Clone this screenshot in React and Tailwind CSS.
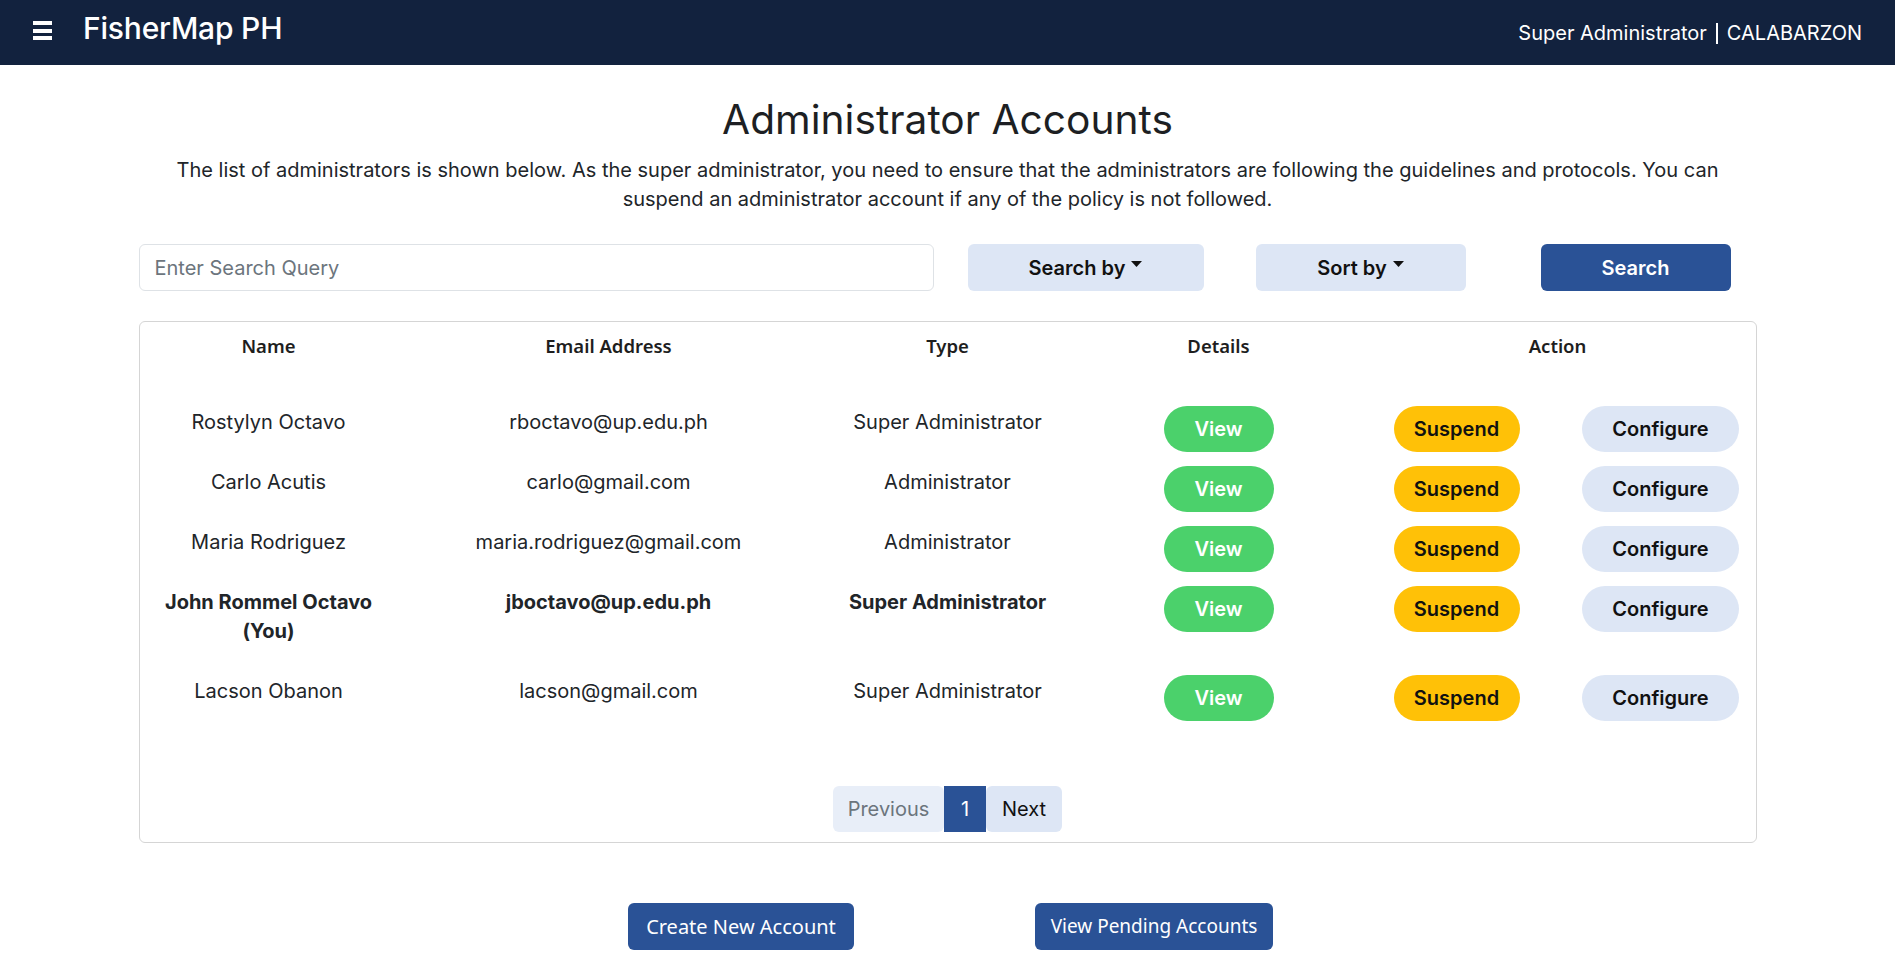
import React from "react";

const rows = [
  { name: ["Rostylyn Octavo"], email: "rboctavo@up.edu.ph", type: "Super Administrator" },
  { name: ["Carlo Acutis"], email: "carlo@gmail.com", type: "Administrator" },
  { name: ["Maria Rodriguez"], email: "maria.rodriguez@gmail.com", type: "Administrator" },
  { name: ["John Rommel Octavo", "(You)"], email: "jboctavo@up.edu.ph", type: "Super Administrator", me: true },
  { name: ["Lacson Obanon"], email: "lacson@gmail.com", type: "Super Administrator" },
];

function Caret() {
  return (
    <svg width="11" height="6" viewBox="0 0 11 6" className="ml-[6px] mb-[8px]">
      <path d="M0 0 L11 0 L5.5 6 Z" fill="#111" />
    </svg>
  );
}

export default function App() {
  const inter = { fontFamily: "Inter, 'Liberation Sans', sans-serif" };
  return (
    <div className="min-h-screen bg-white text-[#212529]" style={inter}>
      {/* Navbar */}
      <nav className="h-[65px] bg-[#12223e] flex items-start px-[33px] text-white">
        <div className="mt-[21px] flex flex-col gap-[3.5px] w-[19px]">
          <div className="h-[4px] bg-white" />
          <div className="h-[4px] bg-white" />
          <div className="h-[4px] bg-white" />
        </div>
        <div className="ml-[31px] mt-[13px] text-[30px] leading-[30px] font-medium tracking-[-0.2px]">FisherMap PH</div>
        <div className="ml-auto mt-[21px] flex items-center text-[20px] leading-[24px]">
          <span>Super Administrator</span>
          <span className="mx-[9px] w-[2px] h-[21px] bg-white" />
          <span>CALABARZON</span>
        </div>
      </nav>

      {/* Heading */}
      <h1 className="mt-[31px] text-center text-[40.7px] leading-[48px] font-normal text-[#1d1f23]">Administrator Accounts</h1>
      <p className="mt-[12px] text-center text-[20px] leading-[29px]">
        The list of administrators is shown below. As the super administrator, you need to ensure that the administrators are following the guidelines and protocols. You can
        <br />
        suspend an administrator account if any of the policy is not followed.
      </p>

      {/* Search row */}
      <div className="w-[1618px] mx-auto mt-[30px] flex items-center">
        <div className="w-[795px] h-[47px] border border-[#dee2e6] rounded-[6px] flex items-center px-[15px] text-[20px] text-[#6c757d]">
          Enter Search Query
        </div>
        <button className="ml-[34px] w-[236px] h-[47px] rounded-[6px] bg-[#dde6f5] text-[20px] font-semibold text-[#111] flex items-center justify-center">
          Search by<Caret />
        </button>
        <button className="ml-[52px] w-[210px] h-[47px] rounded-[6px] bg-[#dde6f5] text-[20px] font-semibold text-[#111] flex items-center justify-center">
          Sort by<Caret />
        </button>
        <button className="ml-[75px] w-[190px] h-[47px] rounded-[6px] bg-[#2a5296] text-[20px] font-semibold text-white flex items-center justify-center">
          Search
        </button>
      </div>

      {/* Table card */}
      <div className="w-[1618px] mx-auto mt-[30px] border border-[#d5d5d5] rounded-[6px] pt-[9px] pb-[10px]">
        <div
          className="grid grid-cols-[218px_462px_216px_326px_150px_219px] pl-[20px] text-[18.5px] leading-[29px] font-semibold text-[#1e1e1e] h-[75px]"
          style={{ fontFamily: "'Noto Sans', 'Open Sans', sans-serif" }}
        >
          <div className="text-center">Name</div>
          <div className="text-center">Email Address</div>
          <div className="text-center">Type</div>
          <div className="text-center">Details</div>
          <div className="col-span-2 text-center pr-[17px]">Action</div>
        </div>
        {rows.map((r, i) => (
          <div key={i} className="grid grid-cols-[218px_462px_216px_326px_150px_219px] pl-[20px] items-start text-[20px]">
            <div className={`text-center pt-[2px] pb-[29px] leading-[29px] whitespace-nowrap ${r.me ? "font-bold" : ""}`}>
              {r.name.map((n, j) => (
                <div key={j}>{n}</div>
              ))}
            </div>
            <div className={`text-center pt-[2px] leading-[29px] whitespace-nowrap ${r.me ? "font-bold" : ""}`}>{r.email}</div>
            <div className={`text-center pt-[2px] leading-[29px] whitespace-nowrap ${r.me ? "font-bold" : ""}`}>{r.type}</div>
            <div className="flex justify-center">
              <button className="w-[110px] h-[46px] rounded-full bg-[#4bd16b] text-white font-semibold text-[20px]">View</button>
            </div>
            <div className="flex justify-center">
              <button className="w-[126px] h-[46px] rounded-full bg-[#ffc107] text-[#111] font-semibold text-[20px]">Suspend</button>
            </div>
            <div className="flex justify-center pl-[39px]">
              <button className="w-[157px] h-[46px] rounded-full bg-[#dde6f5] text-[#111] font-semibold text-[20px]">Configure</button>
            </div>
          </div>
        ))}

        {/* Pagination */}
        <div className="mt-[51px] flex justify-center text-[20px]">
          <div className="w-[111px] h-[46px] rounded-[6px] bg-[#e8eef8] text-[#6c757d] flex items-center justify-center">Previous</div>
          <div className="w-[42px] h-[46px] bg-[#2a5296] text-white flex items-center justify-center">1</div>
          <div className="w-[76px] h-[46px] rounded-[6px] bg-[#dde6f5] text-[#111] flex items-center justify-center">Next</div>
        </div>
      </div>

      {/* Bottom buttons */}
      <div
        className="mt-[60px] ml-[6px] flex justify-center gap-[181px] text-[20px] text-white pb-[20px]"
        style={{ fontFamily: "'Noto Sans', 'Open Sans', sans-serif" }}
      >
        <button className="w-[226px] h-[47px] rounded-[6px] bg-[#2a5296] flex items-center justify-center">Create New Account</button>
        <button className="w-[238px] h-[47px] rounded-[6px] bg-[#2a5296] flex items-center justify-center text-[19px]">View Pending Accounts</button>
      </div>
    </div>
  );
}
